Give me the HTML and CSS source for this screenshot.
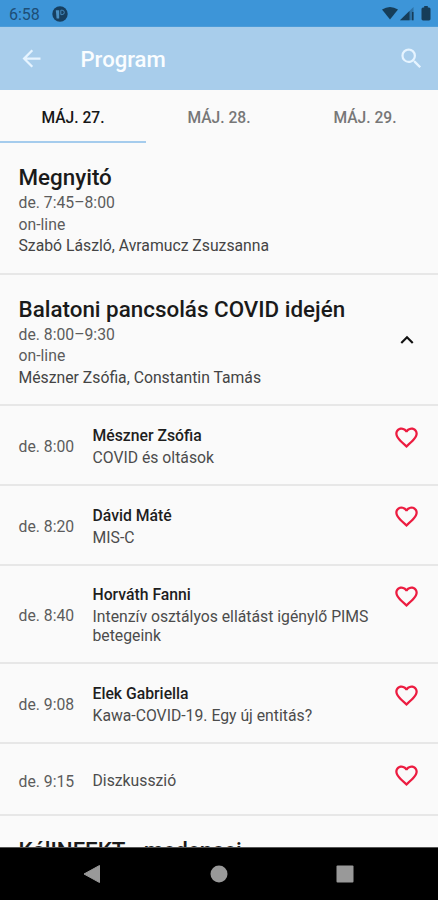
FILE: index.html
```html
<!DOCTYPE html>
<html lang="hu">
<head>
<meta charset="utf-8">
<title>Program</title>
<link rel="stylesheet" href="styles.css">
</head>
<body>
<svg class="defs" width="0" height="0" aria-hidden="true">
  <symbol id="heart" viewBox="0 0 24 24"><path d="M16.5 3c-1.74 0-3.41.81-4.5 2.09C10.910 3.81 9.240 3 7.5 3 4.420 3 2 5.420 2 8.5c0 3.780 3.400 6.860 8.550 11.540L12 21.350l1.450-1.320C18.600 15.360 22 12.280 22 8.500 22 5.420 19.580 3 16.500 3zm-4.400 15.550l-.1.1-.1-.1C7.140 14.240 4 11.390 4 8.500 4 6.500 5.500 5 7.500 5c1.540 0 3.040.990 3.570 2.360h1.870C13.460 5.990 14.960 5 16.500 5c2 0 3.500 1.500 3.500 3.500 0 2.890-3.140 5.740-7.900 10.050z"/></symbol>
</svg>
<div class="screen">
  <div class="status">
    <span class="clock">6:58</span>
    <svg class="notif" width="16" height="16" viewBox="0 0 16 16"><circle cx="8" cy="8" r="7.700" fill="#163f60"/><path d="M3.800 4.200h3.400v8.300H4.600z" fill="#4a90c4"/><path d="M8.800 4.200h1.300a2.200 2.200 0 0 1 0 4.400H8.800z" fill="none" stroke="#4a90c4" stroke-width=".9"/></svg>
    <svg class="signals" width="50" height="16" viewBox="0 0 50 16" fill="#163d59"><path d="M0 3.500Q8 -1.500 16 3.500L8 13.500z"/><path d="M18 14.300L31.500 1v13.300z" opacity=".4"/><path d="M18 14.300L27.500 4.900v9.400z"/><path d="M30 6h1.500v8.300H30z"/><path d="M42.200 0h3.600v1.500H47q1.500 0 1.500 1.500v10q0 1.400-1.500 1.400h-6q-1.500 0-1.500-1.400V3q0-1.500 1.500-1.500h1.200z"/></svg>
  </div>
  <header class="appbar">
    <svg class="back" width="27" height="27" viewBox="0 0 24 24" fill="#e6f4ff"><path d="M20 11H7.830l5.590-5.590L12 4l-8 8 8 8 1.410-1.410L7.830 13H20z"/></svg>
    <h1>Program</h1>
    <svg class="search" width="27" height="27" viewBox="0 0 24 24" fill="#e6f4ff"><path d="M15.500 14h-.79l-.28-.27A6.470 6.470 0 0 0 16 9.500 6.500 6.500 0 1 0 9.500 16c1.610 0 3.090-.59 4.230-1.570l.27.28v.79l5 4.990L20.490 19zm-6 0C7.010 14 5 11.990 5 9.500S7.010 5 9.500 5 14 7.010 14 9.500 11.990 14 9.500 14z"/></svg>
  </header>
  <nav class="tabs">
    <span class="tab active">MÁJ. 27.</span>
    <span class="tab">MÁJ. 28.</span>
    <span class="tab">MÁJ. 29.</span>
  </nav>
  <main class="list">
    <section class="session">
      <div>
        <h2>Megnyitó</h2>
        <p>de. 7:45–8:00</p>
        <p>on-line</p>
        <p class="people">Szabó László, Avramucz Zsuzsanna</p>
      </div>
    </section>
    <section class="session">
      <div>
        <h2>Balatoni pancsolás COVID idején</h2>
        <p>de. 8:00–9:30</p>
        <p>on-line</p>
        <p class="people">Mészner Zsófia, Constantin Tamás</p>
      </div>
      <svg class="chevron" width="26" height="26" viewBox="0 0 24 24" fill="#111"><path d="M12 8l-6 6 1.410 1.410L12 10.830l4.590 4.580L18 14z"/></svg>
    </section>
    <article class="talk">
      <span class="time">de. 8:00</span>
      <div class="info"><h3>Mészner Zsófia</h3><p>COVID és oltások</p></div>
      <svg class="heart"><use href="#heart"/></svg>
    </article>
    <article class="talk">
      <span class="time">de. 8:20</span>
      <div class="info"><h3>Dávid Máté</h3><p>MIS-C</p></div>
      <svg class="heart"><use href="#heart"/></svg>
    </article>
    <article class="talk tall">
      <span class="time">de. 8:40</span>
      <div class="info"><h3>Horváth Fanni</h3><p>Intenzív osztályos ellátást igénylő PIMS betegeink</p></div>
      <svg class="heart"><use href="#heart"/></svg>
    </article>
    <article class="talk">
      <span class="time">de. 9:08</span>
      <div class="info"><h3>Elek Gabriella</h3><p>Kawa-COVID-19. Egy új entitás?</p></div>
      <svg class="heart"><use href="#heart"/></svg>
    </article>
    <article class="talk short">
      <span class="time">de. 9:15</span>
      <div class="info"><p>Diszkusszió</p></div>
      <svg class="heart"><use href="#heart"/></svg>
    </article>
    <section class="session last">
      <div><h2>KálINFEKT - medencei</h2></div>
    </section>
  </main>
  <footer class="navbar">
    <svg width="18" height="20" viewBox="0 0 18 20"><path d="M1 10L16.500 1.500v17z" fill="#999" stroke="#999" stroke-linejoin="round"/></svg>
    <svg width="18" height="18" viewBox="0 0 18 18"><circle cx="9" cy="9" r="8.500" fill="#999"/></svg>
    <svg width="18" height="18" viewBox="0 0 18 18"><rect x=".5" y=".5" width="17" height="17" rx="1" fill="#999"/></svg>
  </footer>
</div>
</body>
</html>
```
FILE: styles.css
```css
* { box-sizing: border-box; }
body, h1, h2, h3, p { margin: 0; }
body { font-family: Roboto, sans-serif; background: #fafafa; }
.defs { display: block; height: 0; }
.screen { width: 438px; height: 900px; display: flex; flex-direction: column; overflow: hidden; background: #fafafa; }

.status { flex: none; height: 27px; display: flex; align-items: center; padding: 2px 6px 0 9px; background: #3d95d8; border-bottom: 1px solid #4c9cd9; }
.clock { width: 43px; font-size: 16px; color: #1d4e76; }
.signals { margin-left: auto; }

.appbar { flex: none; height: 63px; display: flex; align-items: center; padding: 0 13px 0 17.5px; background: #a8cdeb; }
.back, .search { position: relative; top: -.5px; }
.search { margin-left: auto; }
.appbar h1 { margin: 1px 0 0 36px; font-size: 22.1px; line-height: 28px; font-weight: 500; color: #fafdff; }

.tabs { flex: none; height: 53px; display: grid; grid-template-columns: repeat(3, 1fr); }
.tab { display: flex; align-items: center; justify-content: center; padding-top: 4px; border-bottom: 2px solid transparent; font-size: 15.6px; font-weight: 500; color: #777; }
.tab.active { color: #161616; border-color: #a5cced; }

.list { flex: 1; min-height: 0; overflow: hidden; }
.session { height: 131.5px; display: flex; justify-content: space-between; padding: 20px 18px 0 18.5px; border-bottom: 2px solid #e7e7e7; }
.session h2 { font-size: 22.4px; line-height: 29px; font-weight: 500; color: #1a1a1a; white-space: nowrap; }
.session p { font-size: 15.75px; line-height: 21.5px; color: #5c5c5c; }
.session .people { color: #444; }
.chevron { margin-top: 32.5px; }
.last { border: 0; }

.talk { height: 79.8px; display: flex; align-items: center; padding: 4px 0 0 18.5px; border-bottom: 2px solid #e7e7e7; }
.tall { height: 98.8px; }
.short { height: 72px; padding-top: 5px; }
.time { width: 74px; font-size: 15.75px; line-height: 20px; color: #5c5c5c; }
.info { width: 290px; padding-bottom: 2px; font-size: 15.75px; }
.info h3 { margin-bottom: 1px; font-size: 15.75px; line-height: 22px; font-weight: 500; color: #1e1e1e; }
.info p { line-height: 19px; color: #4c4c4c; }
.heart { align-self: flex-start; width: 27px; height: 27px; margin: 13.6px 0 0 10.5px; fill: #ec1c40; }
.short .heart { margin-top: 13px; }

.navbar { flex: none; height: 53px; display: flex; align-items: center; justify-content: space-between; padding: 0 84px 0 83px; background: #000; border-top: 1px solid #555; }
```
